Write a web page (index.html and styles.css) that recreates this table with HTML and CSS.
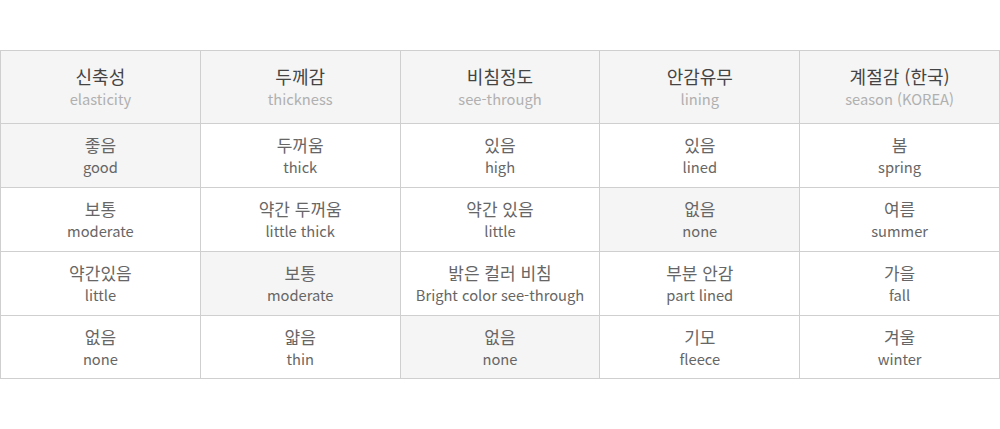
FILE: index.html
```html
<!DOCTYPE html>
<html lang="ko">
<head>
<meta charset="utf-8">
<link rel="stylesheet" href="styles.css">
</head>
<body>
<table class="spec">
  <thead>
    <tr>
      <th><span class="ko">신축성</span><span class="en">elasticity</span></th>
      <th><span class="ko">두께감</span><span class="en">thickness</span></th>
      <th><span class="ko">비침정도</span><span class="en">see-through</span></th>
      <th><span class="ko">안감유무</span><span class="en">lining</span></th>
      <th><span class="ko">계절감 (한국)</span><span class="en">season (KOREA)</span></th>
    </tr>
  </thead>
  <tbody>
    <tr>
      <td class="on"><span class="ko">좋음</span><span class="en">good</span></td>
      <td><span class="ko">두꺼움</span><span class="en">thick</span></td>
      <td><span class="ko">있음</span><span class="en">high</span></td>
      <td><span class="ko">있음</span><span class="en">lined</span></td>
      <td><span class="ko">봄</span><span class="en">spring</span></td>
    </tr>
    <tr>
      <td><span class="ko">보통</span><span class="en">moderate</span></td>
      <td><span class="ko">약간 두꺼움</span><span class="en">little thick</span></td>
      <td><span class="ko">약간 있음</span><span class="en">little</span></td>
      <td class="on"><span class="ko">없음</span><span class="en">none</span></td>
      <td><span class="ko">여름</span><span class="en">summer</span></td>
    </tr>
    <tr>
      <td><span class="ko">약간있음</span><span class="en">little</span></td>
      <td class="on"><span class="ko">보통</span><span class="en">moderate</span></td>
      <td><span class="ko">밝은 컬러 비침</span><span class="en">Bright color see-through</span></td>
      <td><span class="ko">부분 안감</span><span class="en">part lined</span></td>
      <td><span class="ko">가을</span><span class="en">fall</span></td>
    </tr>
    <tr>
      <td><span class="ko">없음</span><span class="en">none</span></td>
      <td><span class="ko">얇음</span><span class="en">thin</span></td>
      <td class="on"><span class="ko">없음</span><span class="en">none</span></td>
      <td><span class="ko">기모</span><span class="en">fleece</span></td>
      <td><span class="ko">겨울</span><span class="en">winter</span></td>
    </tr>
  </tbody>
</table>
</body>
</html>
```

FILE: styles.css
```css
html, body {
  margin: 0;
  padding: 0;
  background: #fff;
}
body {
  padding-top: 50px;
  font-family: "Noto Sans CJK KR", "Noto Sans", sans-serif;
}
.spec {
  width: 1000px;
  border-collapse: collapse;
  table-layout: fixed;
}
.spec th,
.spec td {
  border: 1px solid #cfcfcf;
  text-align: center;
  vertical-align: middle;
  padding: 0;
  font-weight: normal;
}
.spec th {
  height: 72px;
  background: #f5f5f5;
}
.spec td {
  height: 63px;
}
.spec tbody tr:last-child td {
  height: 62px;
}
.spec td.on {
  background: #f5f5f5;
}
.ko,
.en {
  display: block;
}
.spec th .ko {
  font-size: 18px;
  line-height: 24px;
  color: #444;
}
.spec th .en {
  font-size: 14.7px;
  line-height: 22px;
  color: #b0b0b0;
}
.spec td .ko {
  font-size: 17px;
  line-height: 23px;
  color: #666;
}
.spec td .en {
  font-size: 14.7px;
  line-height: 22px;
  color: #666;
}
```
